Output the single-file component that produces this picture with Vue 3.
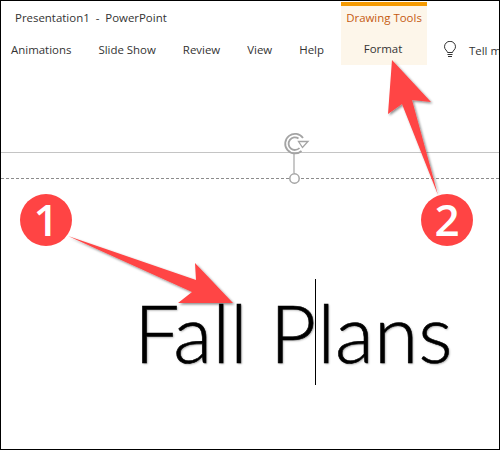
<script setup>
const tabs = ['Animations', 'Slide Show', 'Review', 'View', 'Help']
</script>

<template>
  <div class="window">
    <header class="ribbon">
      <div class="main">
        <div class="title">Presentation1&nbsp; -&nbsp; PowerPoint</div>
        <nav class="tabs">
          <span v-for="t in tabs" :key="t">{{ t }}</span>
        </nav>
      </div>
      <div class="context">
        <div class="context-name">Drawing Tools</div>
        <div class="context-tab">Format</div>
      </div>
      <div class="tell">
        <svg class="bulb" width="14" height="18" viewBox="0 0 14 18" fill="none" stroke="#333" stroke-width="1">
          <path d="M4.500 11.500C4.300 9.600 1.500 8.600 1.500 5.800a5.500 5.500 0 0 1 11 0c0 2.800-2.800 3.800-3 5.700z" />
          <path d="M4.500 13.500h5M5 15.500h4" />
        </svg>
        <span>Tell m</span>
      </div>
    </header>

    <section class="slide">
      <div class="guide-solid"></div>
      <div class="guide-dashed"></div>
      <h1 class="heading">Fall P<span class="caret"></span>lans</h1>
    </section>

    <svg class="overlay" width="500" height="450" viewBox="0 0 500 450">
      <defs>
        <filter id="sh" x="-20%" y="-20%" width="140%" height="140%">
          <feDropShadow dx="1.500" dy="1.500" stdDeviation="1" flood-color="#000" flood-opacity="0.45" />
        </filter>
      </defs>
      <g fill="none" stroke="#a4a4a4">
        <path d="M294 154V173" stroke-width="1.200" />
        <circle cx="294.500" cy="178.500" r="4.700" fill="#fff" stroke-width="1.500" />
        <path d="M301.500 151a9.800 9.800 0 1 1 1.500-13" stroke-width="1.800" />
        <path d="M299.500 148a6.300 6.300 0 1 1 -1-9.500" stroke-width="1.800" />
        <path d="M298.500 141.500h9.500l-5.500 6z" fill="#fff" stroke-width="1.300" />
      </g>
      <g fill="#ff4444" filter="url(#sh)">
        <polygon points="68,236 196,280 195,263 233,303 178,303 192,292" />
        <polygon points="392,60 431,102 412,100 438,195 402,104 388,114" />
      </g>
      <circle cx="46" cy="220" r="26" fill="#ff4444" />
      <circle cx="447" cy="220" r="26" fill="#ff4444" />
      <text x="46" y="236" class="num">1</text>
      <text x="447" y="236" class="num">2</text>
    </svg>
  </div>
</template>

<style scoped>
.window {
  position: relative;
  box-sizing: border-box;
  width: 500px;
  height: 450px;
  overflow: hidden;
  background: #fff;
  border: 1px solid #000;
  font-family: "Open Sans", "Noto Sans", sans-serif;
  font-size: 11.45px;
  color: #333;
}
.ribbon {
  display: flex;
  height: 64px;
}
.main {
  flex: none;
  width: 340px;
  white-space: nowrap;
}
.title {
  padding: 9px 0 0 14px;
  height: 25px;
  line-height: 16px;
  box-sizing: border-box;
}
.tabs {
  display: flex;
  gap: 27px;
  padding: 16px 0 0 10px;
  line-height: 16px;
}
.context {
  flex: none;
  width: 86px;
  margin-top: 1px;
  border-top: 4px solid #f59a00;
  background: #fdf6ea;
  text-align: center;
  white-space: nowrap;
}
.context-name {
  padding-top: 4px;
  line-height: 16px;
  color: #c55a11;
}
.context-tab {
  padding-top: 15px;
  padding-right: 2px;
  line-height: 16px;
}
.tell {
  display: flex;
  align-items: center;
  gap: 12px;
  height: 16px;
  margin-top: 41px;
  padding-left: 16px;
  white-space: nowrap;
}
.bulb {
  flex: none;
}
.slide {
  position: relative;
  height: 384px;
}
.guide-solid {
  margin-top: 87px;
  border-top: 1px solid #c4c4c4;
}
.guide-dashed {
  margin-top: 25px;
  border-top: 1px dashed #8c8c8c;
}
.heading {
  margin: 100px 0 0 133px;
  font-family: Lato, "Open Sans", sans-serif;
  font-size: 80.5px;
  font-weight: 300;
  line-height: 106px;
  color: #000;
  white-space: nowrap;
  -webkit-text-stroke: 0.6px #000;
  text-shadow: 1px 1px 2px rgba(0, 0, 0, 0.35);
}
.caret {
  position: relative;
  display: inline-block;
  width: 0;
  height: 106px;
  margin-left: -1px;
  margin-right: 1px;
  vertical-align: top;
  border-left: 1px solid #000;
}
.overlay {
  position: absolute;
  left: -1px;
  top: -1px;
  pointer-events: none;
}
.num {
  font-family: "Open Sans", sans-serif;
  font-size: 44px;
  font-weight: 600;
  fill: #fff;
  text-anchor: middle;
}
</style>
